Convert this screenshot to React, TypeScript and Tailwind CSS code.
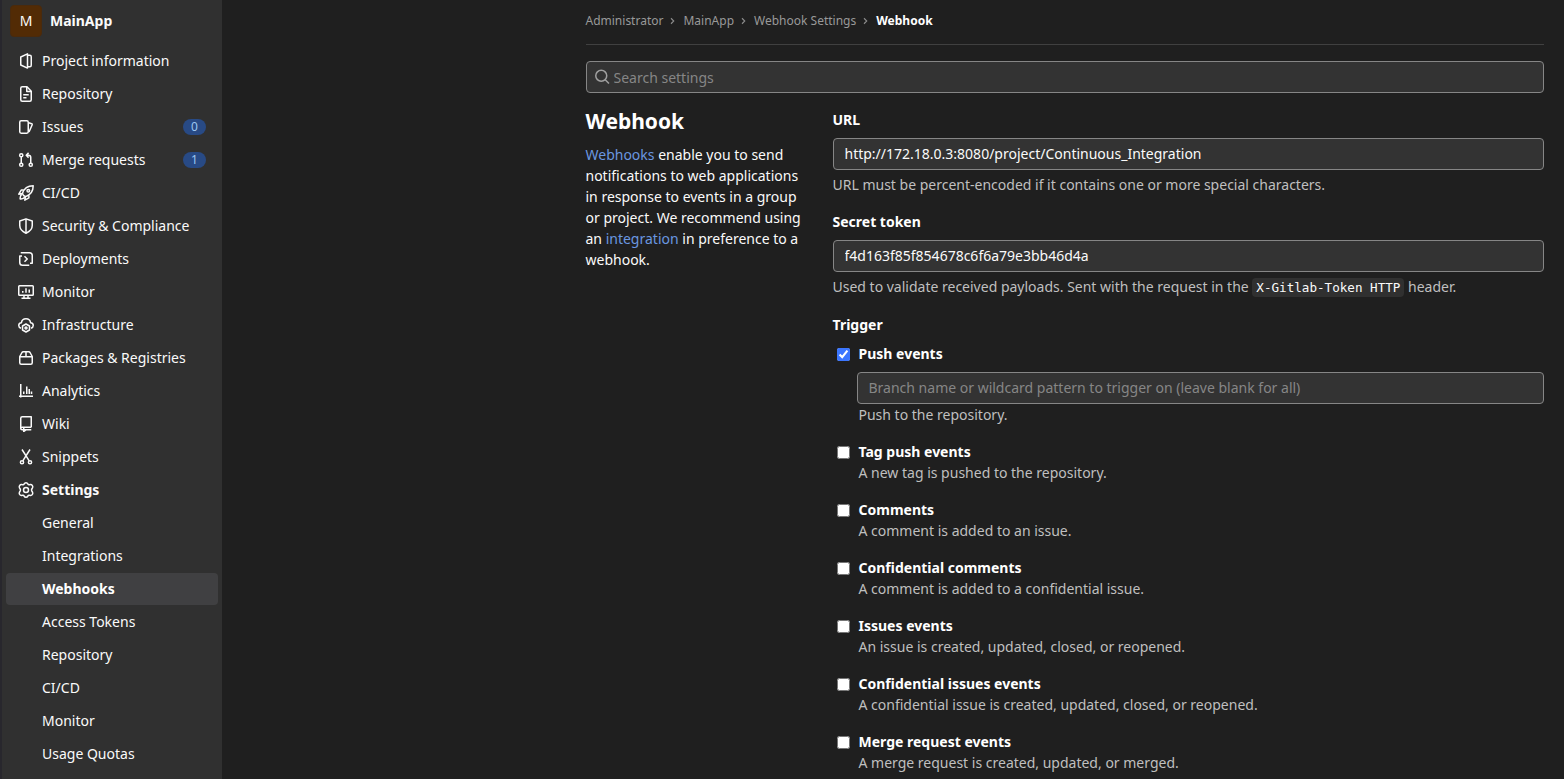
import React from "react";

type IconName =
  | "project" | "doc" | "issues" | "merge" | "rocket" | "shield" | "deploy"
  | "monitor" | "cloud" | "package" | "chart" | "book" | "scissors" | "gear";

const icons: Record<IconName, React.ReactNode> = {
  project: (
    <>
      <path d="M2.75 4 9.5.9v14.2L2.75 12z" />
      <path d="M9.75 2.25h2c1 0 1.5.5 1.500 1.500v8.500c0 1-.5 1.500-1.500 1.500h-2" />
    </>
  ),
  doc: (
    <>
      <path d="M2.75 2.25c0-.9.6-1.5 1.5-1.5H9l4.25 4.5v8.5c0 .9-.6 1.5-1.5 1.5h-7.5c-.9 0-1.5-.6-1.5-1.5z" />
      <path d="M8.75 1v4.5h4.5M5.25 8.75h5.5M5.25 11.75H8.5" />
    </>
  ),
  issues: (
    <>
      <rect x="1.75" y="1.75" width="8.5" height="12.5" rx="1.4" />
      <path d="m10.6 3.75 3.1 1c.5.2.7.55.5 1.05L11 13" />
    </>
  ),
  merge: (
    <>
      <circle cx="3.25" cy="3.25" r="1.6" />
      <circle cx="3.25" cy="12.75" r="1.6" />
      <circle cx="12.75" cy="12.75" r="1.6" />
      <path d="M3.25 5v6M12.75 11V5.5c0-1.4-.8-2.25-2.25-2.25H8.5M10.6.9 8.2 3.25l2.4 2.35" />
    </>
  ),
  rocket: (
    <>
      <path d="M5.5 10.5 4.4 8.4C6 3.6 9.4.9 15.2.8c0 5.6-2.8 9.2-7.6 10.8z" />
      <path d="M5.6 5.1H3.2L.8 9.2l3.6-.7M10.9 10.4v2.4l-4.1 2.4.7-3.6M4.2 9.2c-1.7 1-2.2 2.7-2 4.7 2 .2 3.7-.3 4.7-2" />
      <circle cx="10.3" cy="5.7" r="1.3" />
    </>
  ),
  shield: (
    <>
      <path d="M8 .85 14.25 3v4.5c0 3.5-2.4 5.9-6.25 7.7C4.15 13.4 1.75 11 1.75 7.5V3z" />
      <path d="M8 1v14" />
    </>
  ),
  deploy: (
    <>
      <path d="M2.75 1.75h8.75c1.5 0 2.75 1.25 2.75 2.75v7.75H12" />
      <path d="M11.25 14.25H4.5c-1.5 0-2.75-1.25-2.75-2.75V5H4" />
      <path d="M6.5 5.25 9.25 8 6.5 10.75" />
    </>
  ),
  monitor: (
    <>
      <rect x=".75" y="1.75" width="14.5" height="9.5" rx=".8" />
      <path d="M4.75 7v1.75M8 4.25v4.5M11.25 5.5v3.25M6 11.5V14M10 11.5V14M3.5 14.25h9" />
    </>
  ),
  cloud: (
    <>
      <path d="M3 11.25C1.5 10.7.75 9.8.75 8.5c0-1.6 1.1-2.75 2.7-2.8C3.8 3.2 5.6 1.75 8 1.75s4.2 1.45 4.55 3.95c1.6.05 2.7 1.2 2.7 2.8 0 1.3-.75 2.2-2.25 2.75" />
      <path d="m8 7 3.5 2v4L8 15l-3.5-2V9z" />
      <circle cx="8" cy="11" r="1" />
    </>
  ),
  package: (
    <path d="M1.75 6.5 4 2.5c.3-.5.65-.75 1.2-.75h5.6c.55 0 .9.25 1.2.75l2.25 4v6.25c0 .9-.6 1.5-1.5 1.5h-9.5c-.9 0-1.5-.6-1.5-1.5zM1.9 6.75h12.2M8 2v4.500" />
  ),
  chart: (
    <path d="M2.75 1v13.5M1 13.25h14M5.75 8.5V11M8.75 3.5V11M11.25 6V11M13.5 8.5V11" />
  ),
  book: (
    <path d="M13.25 11.25V.75H4.25c-.9 0-1.5.6-1.5 1.5V12.5M13.25 11.25h-9c-1 0-1.5.5-1.5 1.25s.5 1.25 1.5 1.25h9M5.75 11.5v4L8 13.9" />
  ),
  scissors: (
    <>
      <circle cx="4" cy="13.25" r="1.6" />
      <circle cx="12" cy="13.25" r="1.6" />
      <path d="M4 .5 11.200 11.800M12 .5 4.800 11.800" />
    </>
  ),
  gear: (
    <>
      <path d="M6.2 1.9Q6.7.75 8 .75t1.8 1.15q.45.9 1.4.8l1.200-.1q1.300-.05 2 1.050.7 1.200.1 2.250l-.55.850q-.4.650-.4 1.250t.4 1.250l.55.850q.6 1.050-.1 2.250-.7 1.100-2 1.050l-1.200-.1q-.95-.1-1.400.8Q9.300 15.250 8 15.250t-1.800-1.150q-.45-.9-1.400-.8l-1.200.1q-1.300.05-2-1.050-.7-1.200-.1-2.250l.55-.85q.4-.65.4-1.250t-.4-1.250l-.55-.85q-.6-1.050.1-2.250.7-1.100 2-1.050l1.200.1q.95.1 1.400-.8z" />
      <circle cx="8" cy="8" r="2.5" />
    </>
  ),
};

function Icon({ name }: { name: IconName }) {
  return (
    <svg viewBox="0 0 16 16" className="h-4 w-4 shrink-0" fill="none" stroke="currentColor" strokeWidth="1.5" strokeLinejoin="round">
      {icons[name]}
    </svg>
  );
}

const nav: { label: string; icon: IconName; badge?: string }[] = [
  { label: "Project information", icon: "project" },
  { label: "Repository", icon: "doc" },
  { label: "Issues", icon: "issues", badge: "0" },
  { label: "Merge requests", icon: "merge", badge: "1" },
  { label: "CI/CD", icon: "rocket" },
  { label: "Security & Compliance", icon: "shield" },
  { label: "Deployments", icon: "deploy" },
  { label: "Monitor", icon: "monitor" },
  { label: "Infrastructure", icon: "cloud" },
  { label: "Packages & Registries", icon: "package" },
  { label: "Analytics", icon: "chart" },
  { label: "Wiki", icon: "book" },
  { label: "Snippets", icon: "scissors" },
  { label: "Settings", icon: "gear" },
];

const settings = ["General", "Integrations", "Webhooks", "Access Tokens", "Repository", "CI/CD", "Monitor", "Usage Quotas"];

const events = [
  ["Tag push events", "A new tag is pushed to the repository."],
  ["Comments", "A comment is added to an issue."],
  ["Confidential comments", "A comment is added to a confidential issue."],
  ["Issues events", "An issue is created, updated, closed, or reopened."],
  ["Confidential issues events", "A confidential issue is created, updated, closed, or reopened."],
  ["Merge request events", "A merge request is created, updated, or merged."],
];

const field =
  "block h-8 w-full rounded-[4px] border border-[#868686] bg-[#333333] px-[11px] pb-px text-[14px] text-[#fafafa] placeholder:text-[#868686] outline-none";

function Sidebar() {
  return (
    <aside className="h-full w-[222px] shrink-0 border-l-2 border-[#28272d] bg-[#303030] pt-[5px] text-[#fafafa]">
      <div className="mb-2 flex h-8 items-center gap-2 pl-2">
        <div className="flex h-8 w-8 items-center justify-center rounded-[4px] border border-[#4a2a0c] bg-[#522b05] pb-px text-[14px]">M</div>
        <span className="pb-px font-bold">MainApp</span>
      </div>
      <nav className="flex flex-col gap-px px-1">
        {nav.map((n) => (
          <a key={n.label} className={`flex h-8 items-center gap-2 px-3 ${n.label === "Settings" ? "font-bold" : ""}`}>
            <Icon name={n.icon} />
            <span className="flex-1 pb-px">{n.label}</span>
            {n.badge && (
              <span className="flex h-4 w-[23px] items-center justify-center rounded-full bg-[#284a85] text-[12px] leading-4 text-[#9dc7f1]">{n.badge}</span>
            )}
          </a>
        ))}
        {settings.map((s) => (
          <a key={s} className={`flex h-8 items-center rounded-[4px] pb-px pl-9 ${s === "Webhooks" ? "bg-[#404042] font-bold text-white" : ""}`}>
            {s}
          </a>
        ))}
      </nav>
    </aside>
  );
}

function Chevron() {
  return (
    <svg viewBox="0 0 8 8" className="mx-[6px] mt-px h-2 w-2" fill="none" stroke="#8c8c8c" strokeWidth="1.1">
      <path d="M2 1.25 4.75 4 2 6.75" />
    </svg>
  );
}

function Breadcrumbs() {
  return (
    <div className="flex h-[45px] items-center border-b border-[#404040] pb-[3px] text-[12px] text-[#999999]">
      <span>Administrator</span>
      <Chevron />
      <span>MainApp</span>
      <Chevron />
      <span>Webhook Settings</span>
      <Chevron />
      <span className="font-bold text-white">Webhook</span>
    </div>
  );
}

function Check({ label, checked }: { label: string; checked?: boolean }) {
  return (
    <label className="flex h-[21px] items-center font-bold text-white">
      <input type="checkbox" defaultChecked={checked} className="mt-[2px] mr-[9px] ml-1 h-[13px] w-[13px] accent-[#3b76ff]" />
      {label}
    </label>
  );
}

export default function App() {
  return (
    <div className="flex h-[779px] w-full overflow-hidden bg-[#1f1f1f] font-['Noto_Sans',sans-serif] text-[14px] leading-[21px] text-[#fafafa]">
      <Sidebar />
      <main className="min-w-0 flex-1 pr-5 pl-[363.5px]">
        <Breadcrumbs />
        <div className="mt-4 flex h-8 items-center rounded-[4px] border border-[#868686] bg-[#333333] pl-2 text-[#868686]">
          <svg viewBox="0 0 16 16" className="mr-[3px] h-4 w-4" fill="none" stroke="#a0a0a0" strokeWidth="1.5">
            <circle cx="6.25" cy="6.75" r="5.5" />
            <path d="m10.2 10.700 3.8 3.800" />
          </svg>
          <input placeholder="Search settings" className="h-full min-w-0 flex-1 bg-transparent outline-none placeholder:text-[#868686]" />
        </div>
        <div className="flex pt-4">
          <section className="w-[247px] shrink-0 pr-[25px]">
            <h4 className="mb-[11px] text-[21px] leading-6 font-bold text-white">Webhook</h4>
            <p>
              <a className="text-[#6a97e0]">Webhooks</a> enable you to send notifications to web applications in response to events in a group or project. We recommend using an <a className="text-[#6a97e0]">integration</a> in preference to a webhook.
            </p>
          </section>
          <form className="min-w-0 flex-1 text-[#bfbfbf]">
            <div className="mb-2 font-bold text-white">URL</div>
            <input className={field} defaultValue="http://172.18.0.3:8080/project/Continuous_Integration" />
            <p className="mt-1 mb-4">URL must be percent-encoded if it contains one or more special characters.</p>
            <div className="mb-2 font-bold text-white">Secret token</div>
            <input className={field} defaultValue="f4d163f85f854678c6f6a79e3bb46d4a" />
            <p className="mt-1 mb-[17px] h-[21px]">
              Used to validate received payloads. Sent with the request in the{" "}
              <code className="rounded-[4px] bg-[#303030] px-1 py-[2px] font-['DejaVu_Sans_Mono',monospace] text-[12.6px] text-[#fafafa]">X-Gitlab-Token HTTP</code> header.
            </p>
            <div className="mb-2 font-bold text-white">Trigger</div>
            <Check label="Push events" checked />
            <div className="mt-2 mb-4 pl-6">
              <input className={field} placeholder="Branch name or wildcard pattern to trigger on (leave blank for all)" />
              <p className="pl-[2px]">Push to the repository.</p>
            </div>
            {events.map(([title, text]) => (
              <div key={title} className="mb-4">
                <Check label={title} />
                <p className="pl-[26px]">{text}</p>
              </div>
            ))}
          </form>
        </div>
      </main>
    </div>
  );
}
